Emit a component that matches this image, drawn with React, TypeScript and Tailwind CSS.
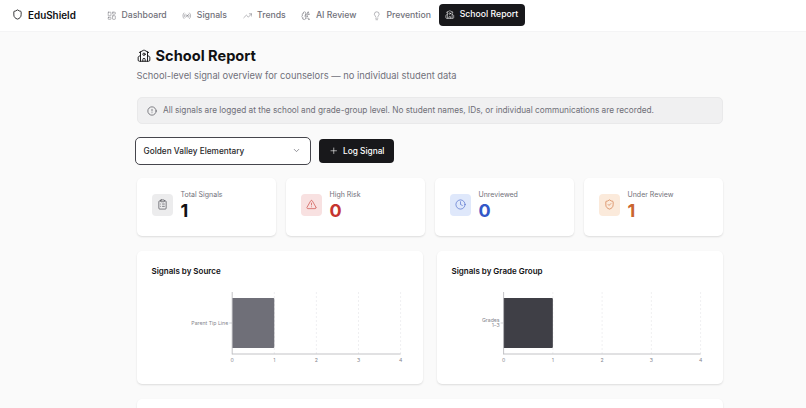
import {
  BrainCircuit,
  ChevronDown,
  CircleAlert,
  ClipboardList,
  Clock,
  LayoutDashboard,
  Lightbulb,
  Plus,
  Radio,
  School,
  Shield,
  ShieldCheck,
  TrendingUp,
  TriangleAlert,
} from 'lucide-react';

const nav = [
  { label: 'Dashboard', icon: LayoutDashboard },
  { label: 'Signals', icon: Radio },
  { label: 'Trends', icon: TrendingUp },
  { label: 'AI Review', icon: BrainCircuit },
  { label: 'Prevention', icon: Lightbulb },
];

const stats = [
  { label: 'Total Signals', value: '1', icon: ClipboardList, box: 'bg-[#ececed]', iconColor: 'text-[#3f3f46]', valueColor: 'text-[#111113]' },
  { label: 'High Risk', value: '0', icon: TriangleAlert, box: 'bg-[#f8e1e1]', iconColor: 'text-[#c9413c]', valueColor: 'text-[#c5352f]' },
  { label: 'Unreviewed', value: '0', icon: Clock, box: 'bg-[#dfe8fb]', iconColor: 'text-[#4a68c9]', valueColor: 'text-[#3358c8]' },
  { label: 'Under Review', value: '1', icon: ShieldCheck, box: 'bg-[#fbeadb]', iconColor: 'text-[#cf6f3a]', valueColor: 'text-[#c9652f]' },
];

function BarChart({ x0, labels, fill }: { x0: number; labels: string[]; fill: string }) {
  const x4 = 263.6;
  const step = (x4 - x0) / 4;
  const ticks = [0, 1, 2, 3, 4];
  const labelY = labels.length > 1 ? 30.5 : 33.8;
  return (
    <svg width="286" height="76" className="block">
      {ticks.slice(1).map((t) => (
        <line key={t} x1={x0 + t * step} x2={x0 + t * step} y1="1" y2="63" stroke="#e4e4e7" strokeWidth="0.6" strokeDasharray="2 2" />
      ))}
      <path d={`M${x0} 7H${x0 + step - 1}a1 1 0 0 1 1 1V56a1 1 0 0 1-1 1H${x0}Z`} fill={fill} />
      <line x1={x0} x2={x0} y1="1" y2="63.4" stroke="#b4b4b8" strokeWidth="0.8" />
      <line x1={x0} x2={x4} y1="63" y2="63" stroke="#b4b4b8" strokeWidth="0.8" />
      <line x1={x0 - 3} x2={x0} y1="32" y2="32" stroke="#b4b4b8" strokeWidth="0.6" />
      {labels.map((l, i) => (
        <text key={l} x={x0 - 4} y={labelY + i * 5.4} textAnchor="end" fontSize="5.2" fill="#85858d">
          {l}
        </text>
      ))}
      {ticks.map((t) => (
        <text key={t} x={x0 + t * step} y="71.2" textAnchor="middle" fontSize="5.2" fill="#85858d">
          {t}
        </text>
      ))}
    </svg>
  );
}

export default function App() {
  return (
    <div className="h-[408px] overflow-hidden bg-[#fafafa] font-['Inter',sans-serif] text-[#111113]">
      {/* Top bar */}
      <header className="flex h-[32px] items-center border-b border-[#f4f4f5] bg-white pb-px pl-3">
        <div className="flex w-[87.2px] items-center gap-[5px]">
          <Shield size={11} strokeWidth={1.8} />
          <span className="text-[9.9px] font-semibold">EduShield</span>
        </div>
        <nav className="flex items-center">
          {nav.map(({ label, icon: Icon }) => (
            <a key={label} className="flex items-center gap-[5px] px-[7.8px] pb-[3px] pt-[5px] text-[8.68px] font-medium text-[#71717a]">
              <Icon size={9.5} strokeWidth={1.3} />
              {label}
            </a>
          ))}
          <a className="flex h-[22px] w-[86px] items-center justify-center gap-[5px] rounded-[4px] bg-[#18181b] text-[8.68px] font-medium text-white">
            <School size={9.5} strokeWidth={1.4} />
            School Report
          </a>
        </nav>
      </header>

      <main className="ml-[136.5px] w-[586px] pt-[15px]">
        {/* Title */}
        <h1 className="flex h-[18px] items-center gap-[5px] text-[14.6px] font-bold leading-none">
          <School size={14} strokeWidth={1.6} />
          School Report
        </h1>
        <p className="mt-[4px] text-[9.33px] leading-[14px] text-[#71717a]">
          School-level signal overview for counselors — no individual student data
        </p>

        {/* Privacy note */}
        <div className="mt-[14px] flex h-[27px] items-center gap-[6px] rounded-[5px] border border-[#e9e9ea] bg-[#f0f0f1] pl-[9.5px] pr-[10px] text-[8.26px] text-[#6f6f78]">
          <CircleAlert size={10} strokeWidth={1.5} className="text-[#3f3f46]" />
          All signals are logged at the school and grade-group level. No student names, IDs, or individual communications are recorded.
        </div>

        {/* Controls */}
        <div className="mt-[13px] flex items-center gap-2">
          <button className="-ml-[2px] flex h-[27.5px] w-[176.5px] items-center justify-between rounded-[5px] border-[1.5px] border-[#46464d] bg-white pl-2 pr-[9px] text-[8.26px] font-medium text-[#27272a]">
            Golden Valley Elementary
            <ChevronDown size={9} className="text-[#71717a]" />
          </button>
          <button className="flex h-[24.5px] w-[75px] items-center justify-center gap-[5px] rounded-[4px] bg-[#18181b] text-[8.3px] font-medium text-white">
            <Plus size={9.5} strokeWidth={1.5} />
            Log Signal
          </button>
        </div>

        {/* Stat cards */}
        <div className="mt-[13.5px] grid grid-cols-4 gap-[10px]">
          {stats.map(({ label, value, icon: Icon, box, iconColor, valueColor }) => (
            <div key={label} className="flex h-[58px] items-start gap-[7.5px] rounded-[5px] bg-white pl-[15px] pt-[16px] shadow-[0_1px_2px_rgba(0,0,0,0.12)]">
              <div className={`flex h-[21.5px] w-[21.5px] items-center justify-center rounded-[4px] ${box}`}>
                <Icon size={11} strokeWidth={1.4} className={iconColor} />
              </div>
              <div className="-mt-[4.5px] flex flex-col">
                <span className="text-[7px] leading-[9px] text-[#71717a]">{label}</span>
                <span className={`text-[18px] font-bold leading-[23px] ${valueColor}`}>{value}</span>
              </div>
            </div>
          ))}
        </div>

        {/* Charts */}
        <div className="mt-[14.5px] grid grid-cols-2 gap-[14px]">
          <div className="h-[133px] rounded-[5px] bg-white shadow-[0_1px_2px_rgba(0,0,0,0.12)]">
            <h2 className="px-[15px] pt-[15px] text-[8px] font-semibold leading-[11px]">Signals by Source</h2>
            <div className="mt-[14px]">
              <BarChart x0={95.2} labels={['Parent Tip Line']} fill="#6f6f78" />
            </div>
          </div>
          <div className="h-[133px] rounded-[5px] bg-white shadow-[0_1px_2px_rgba(0,0,0,0.12)]">
            <h2 className="px-[15px] pt-[15px] text-[8px] font-semibold leading-[11px]">Signals by Grade Group</h2>
            <div className="mt-[14px]">
              <BarChart x0={66.6} labels={['Grades', '1–3']} fill="#3f3f46" />
            </div>
          </div>
        </div>

        <div className="mt-[15px] h-[60px] rounded-[5px] bg-white shadow-[0_1px_2px_rgba(0,0,0,0.12)]" />
      </main>
    </div>
  );
}
